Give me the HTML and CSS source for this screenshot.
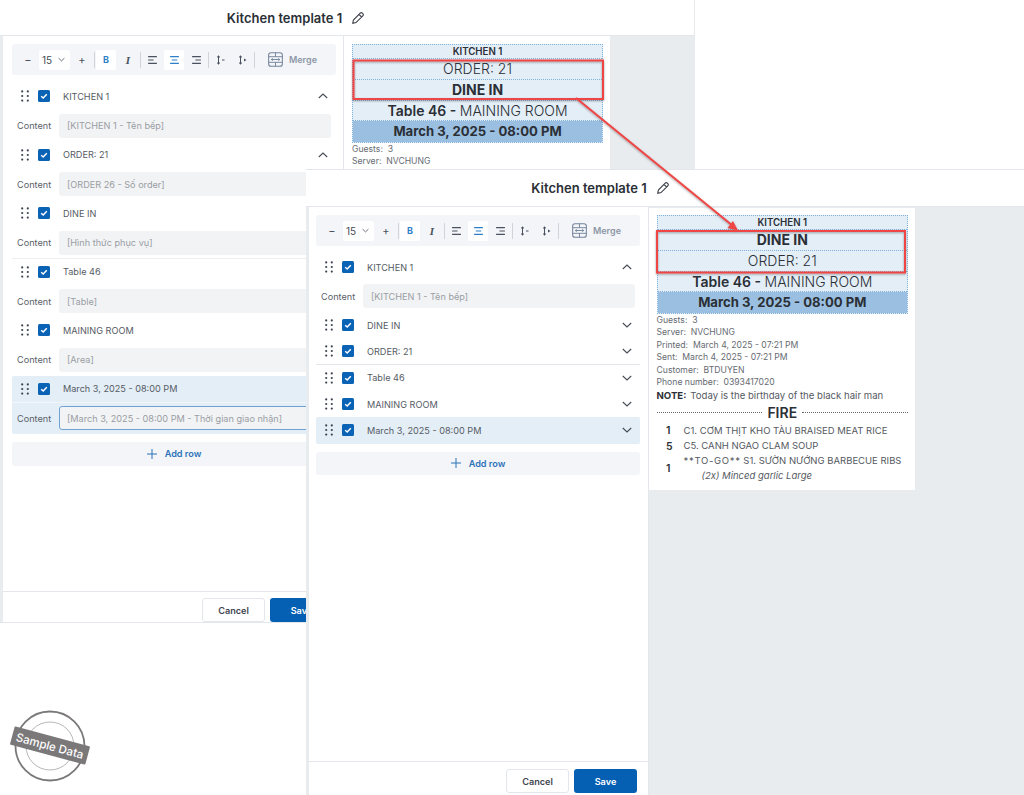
FILE: index.html
```html
<!DOCTYPE html>
<html lang="en">
<head>
<meta charset="utf-8">
<title>Kitchen template</title>
<link rel="stylesheet" href="styles.css">
</head>
<body>
<svg class="sprite" aria-hidden="true">
  <symbol id="grip" viewBox="0 0 8 12"><g fill="#3d4450"><circle cx="1.2" cy="1.4" r="1.1"/><circle cx="6.8" cy="1.4" r="1.1"/><circle cx="1.2" cy="6" r="1.1"/><circle cx="6.8" cy="6" r="1.1"/><circle cx="1.2" cy="10.6" r="1.1"/><circle cx="6.8" cy="10.6" r="1.1"/></g></symbol>
  <symbol id="check" viewBox="0 0 12 12"><rect width="12" height="12" rx="1.5" fill="#0b63b5"/><path d="M3.2 6.2 5.2 8 8.8 4.2" fill="none" stroke="#fff" stroke-width="1.5"/></symbol>
  <symbol id="up" viewBox="0 0 10 6"><path d="M.8 5 5 1l4.2 4" fill="none" stroke="#444b55" stroke-width="1.1"/></symbol>
  <symbol id="down" viewBox="0 0 10 6"><path d="M.8 1 5 5l4.2-4" fill="none" stroke="#444b55" stroke-width="1.1"/></symbol>
  <symbol id="left" viewBox="0 0 10 8"><path d="M1 1h8M1 4h5M1 7h8" fill="none" stroke="#4a5260" stroke-width="1.1"/></symbol>
  <symbol id="center" viewBox="0 0 10 8"><path d="M1 1h8M2.5 4h5M1 7h8" fill="none" stroke="#2d80c8" stroke-width="1.1"/></symbol>
  <symbol id="right" viewBox="0 0 10 8"><path d="M1 1h8M4 4h5M1 7h8" fill="none" stroke="#4a5260" stroke-width="1.1"/></symbol>
  <symbol id="spread" viewBox="0 0 10 10"><path d="M3 1v8M1.500 2.400 3 1l1.500 1.400M1.500 7.600 3 9l1.500-1.400M6.500 5H9" fill="none" stroke="#4a5260" stroke-width="1"/></symbol>
  <symbol id="squeeze" viewBox="0 0 10 10"><path d="M3 1v8M1.500 2.400 3 1l1.500 1.400M1.500 7.600 3 9l1.500-1.400" fill="none" stroke="#4a5260" stroke-width="1"/><path d="M6.500 3.500 9 5 6.500 6.500z" fill="#4a5260"/></symbol>
  <symbol id="merge" viewBox="0 0 16 16"><rect x=".7" y=".7" width="14.600" height="14.600" rx="2.500" fill="none" stroke="#74839a" stroke-width="1.100"/><path d="M.7 5h14.600M.7 11h14.600M8 .7V5M8 11v4.300M3.500 8h9M5 6.800 3.500 8 5 9.200M11 6.800 12.500 8 11 9.200" fill="none" stroke="#74839a" stroke-width="1"/></symbol>
  <symbol id="pencil" viewBox="0 0 12 12"><path d="M.8 11.200 1.400 8 8.200 1.200a1.500 1.500 0 0 1 2.100 0l.5.500a1.500 1.500 0 0 1 0 2.100L4 10.600z M7 2.400l2.600 2.600" fill="none" stroke="#3a3f47" stroke-width="1.100"/></symbol>
  <symbol id="plus" viewBox="0 0 10 10"><path d="M5 0v10M0 5h10" stroke="#2d73b8" stroke-width="1"/></symbol>
</svg>

<main class="stage">
  <section class="window window-back">
    <header class="win-head">
      <h1 class="win-title">Kitchen template 1</h1>
      <svg class="pencil"><use href="#pencil"/></svg>
    </header>
    <div class="win-body">
      <div class="panel">
        <div class="panel-scroll">
          <div class="toolbar">
            <span class="tool">−</span>
            <span class="size">15<svg class="size-caret"><use href="#down"/></svg></span>
            <span class="tool">+</span>
            <i class="sep"></i>
            <span class="tool tool-on tool-bold">B</span>
            <span class="tool tool-italic">I</span>
            <i class="sep"></i>
            <span class="tool"><svg class="ico"><use href="#left"/></svg></span>
            <span class="tool tool-on"><svg class="ico"><use href="#center"/></svg></span>
            <span class="tool"><svg class="ico"><use href="#right"/></svg></span>
            <i class="sep"></i>
            <span class="tool"><svg class="ico"><use href="#spread"/></svg></span>
            <span class="tool"><svg class="ico"><use href="#squeeze"/></svg></span>
            <i class="sep"></i>
            <svg class="merge-ico"><use href="#merge"/></svg>
            <span class="merge-label">Merge</span>
          </div>
          <div class="rows rows-back">
            <div class="row"><svg class="grip"><use href="#grip"/></svg><svg class="check"><use href="#check"/></svg><span class="row-name">KITCHEN 1</span><svg class="chev"><use href="#up"/></svg></div>
            <div class="field"><span class="field-label">Content</span><span class="input">[KITCHEN 1 - Tên bếp]</span></div>
            <div class="row"><svg class="grip"><use href="#grip"/></svg><svg class="check"><use href="#check"/></svg><span class="row-name">ORDER: 21</span><svg class="chev"><use href="#up"/></svg></div>
            <div class="field"><span class="field-label">Content</span><span class="input">[ORDER 26 - Số order]</span></div>
            <div class="row"><svg class="grip"><use href="#grip"/></svg><svg class="check"><use href="#check"/></svg><span class="row-name">DINE IN</span></div>
            <div class="field"><span class="field-label">Content</span><span class="input">[Hình thức phục vụ]</span></div>
            <div class="row row-top-rule"><svg class="grip"><use href="#grip"/></svg><svg class="check"><use href="#check"/></svg><span class="row-name">Table 46</span></div>
            <div class="field"><span class="field-label">Content</span><span class="input">[Table]</span></div>
            <div class="row"><svg class="grip"><use href="#grip"/></svg><svg class="check"><use href="#check"/></svg><span class="row-name">MAINING ROOM</span></div>
            <div class="field"><span class="field-label">Content</span><span class="input">[Area]</span></div>
            <div class="active-group">
              <div class="row"><svg class="grip"><use href="#grip"/></svg><svg class="check"><use href="#check"/></svg><span class="row-name">March 3, 2025 - 08:00 PM</span></div>
              <div class="field field-active"><span class="field-label">Content</span><span class="input input-focus">[March 3, 2025 - 08:00 PM - Thời gian giao nhận]</span></div>
            </div>
          </div>
          <div class="add-row"><svg class="plus"><use href="#plus"/></svg>Add row</div>
        </div>
        <footer class="win-foot">
          <span class="btn btn-cancel">Cancel</span>
          <span class="btn btn-save">Save</span>
        </footer>
      </div>
      <div class="preview">
        <div class="paper">
          <div class="ticket">
            <div class="t-row t-small">KITCHEN 1</div>
            <div class="t-row t-big">ORDER: 21</div>
            <div class="t-row t-big t-strong">DINE IN</div>
            <div class="t-row t-big"><b class="t-mid">Table 46 - </b>MAINING ROOM</div>
            <div class="t-row t-big t-strong t-band">March 3, 2025 - 08:00 PM</div>
          </div>
          <div class="meta">
            <p class="meta-line">Guests:&nbsp; 3</p>
            <p class="meta-line">Server:&nbsp; NVCHUNG</p>
          </div>
        </div>
      </div>
    </div>
  </section>

  <section class="window window-front">
    <header class="win-head">
      <h1 class="win-title">Kitchen template 1</h1>
      <svg class="pencil"><use href="#pencil"/></svg>
    </header>
    <div class="win-body">
      <div class="panel">
        <div class="panel-scroll">
          <div class="toolbar">
            <span class="tool">−</span>
            <span class="size">15<svg class="size-caret"><use href="#down"/></svg></span>
            <span class="tool">+</span>
            <i class="sep"></i>
            <span class="tool tool-on tool-bold">B</span>
            <span class="tool tool-italic">I</span>
            <i class="sep"></i>
            <span class="tool"><svg class="ico"><use href="#left"/></svg></span>
            <span class="tool tool-on"><svg class="ico"><use href="#center"/></svg></span>
            <span class="tool"><svg class="ico"><use href="#right"/></svg></span>
            <i class="sep"></i>
            <span class="tool"><svg class="ico"><use href="#spread"/></svg></span>
            <span class="tool"><svg class="ico"><use href="#squeeze"/></svg></span>
            <i class="sep"></i>
            <svg class="merge-ico"><use href="#merge"/></svg>
            <span class="merge-label">Merge</span>
          </div>
          <div class="rows rows-front">
            <div class="row"><svg class="grip"><use href="#grip"/></svg><svg class="check"><use href="#check"/></svg><span class="row-name">KITCHEN 1</span><svg class="chev"><use href="#up"/></svg></div>
            <div class="field"><span class="field-label">Content</span><span class="input">[KITCHEN 1 - Tên bếp]</span></div>
            <div class="row"><svg class="grip"><use href="#grip"/></svg><svg class="check"><use href="#check"/></svg><span class="row-name">DINE IN</span><svg class="chev"><use href="#down"/></svg></div>
            <div class="row row-rule"><svg class="grip"><use href="#grip"/></svg><svg class="check"><use href="#check"/></svg><span class="row-name">ORDER: 21</span><svg class="chev"><use href="#down"/></svg></div>
            <div class="row"><svg class="grip"><use href="#grip"/></svg><svg class="check"><use href="#check"/></svg><span class="row-name">Table 46</span><svg class="chev"><use href="#down"/></svg></div>
            <div class="row"><svg class="grip"><use href="#grip"/></svg><svg class="check"><use href="#check"/></svg><span class="row-name">MAINING ROOM</span><svg class="chev"><use href="#down"/></svg></div>
            <div class="row row-active"><svg class="grip"><use href="#grip"/></svg><svg class="check"><use href="#check"/></svg><span class="row-name">March 3, 2025 - 08:00 PM</span><svg class="chev"><use href="#down"/></svg></div>
          </div>
          <div class="add-row add-row-front"><svg class="plus"><use href="#plus"/></svg>Add row</div>
        </div>
        <footer class="win-foot">
          <span class="btn btn-cancel">Cancel</span>
          <span class="btn btn-save">Save</span>
        </footer>
      </div>
      <div class="preview">
        <div class="paper">
          <div class="ticket">
            <div class="t-row t-small">KITCHEN 1</div>
            <div class="t-row t-big t-strong">DINE IN</div>
            <div class="t-row t-big">ORDER: 21</div>
            <div class="t-row t-big"><b class="t-mid">Table 46 - </b>MAINING ROOM</div>
            <div class="t-row t-big t-strong t-band">March 3, 2025 - 08:00 PM</div>
          </div>
          <div class="meta">
            <p class="meta-line">Guests:&nbsp; 3</p>
            <p class="meta-line">Server:&nbsp; NVCHUNG</p>
            <p class="meta-line">Printed:&nbsp; March 4, 2025 - 07:21 PM</p>
            <p class="meta-line">Sent:&nbsp; March 4, 2025 - 07:21 PM</p>
            <p class="meta-line">Customer:&nbsp; BTDUYEN</p>
            <p class="meta-line">Phone number:&nbsp; 0393417020</p>
            <p class="note"><b class="note-key">NOTE:</b>Today is the birthday of the black hair man</p>
          </div>
          <div class="fire"><i class="fire-rule"></i><span class="fire-text">FIRE</span><i class="fire-rule"></i></div>
          <div class="item"><span class="qty">1</span><span class="item-name">C1. CƠM THỊT KHO TÀU BRAISED MEAT RICE</span></div>
          <div class="item"><span class="qty">5</span><span class="item-name">C5. CANH NGAO CLAM SOUP</span></div>
          <div class="item"><span class="qty">1</span><div class="item-name"><span class="item-tag">**TO-GO**</span> S1. SƯỜN NƯỚNG BARBECUE RIBS<div class="item-mod">(2x) Minced garlic Large</div></div></div>
        </div>
      </div>
    </div>
  </section>

  <svg class="marks" viewBox="0 0 1024 795" aria-hidden="true">
    <defs>
      <filter id="soft" x="-10%" y="-10%" width="120%" height="120%"><feDropShadow dx="0" dy="1" stdDeviation="1" flood-color="#555" flood-opacity=".55"/></filter>
    </defs>
    <g filter="url(#soft)" fill="none" stroke="#ef4444" stroke-width="2">
      <rect x="353.500" y="60.500" width="249.500" height="38.500"/>
      <rect x="657" y="231" width="248" height="41.500"/>
      <path d="M576 98 733 226"/>
      <path d="M738 230.500 733 221 727.500 228z" fill="#ef4444" stroke="none"/>
    </g>
  </svg>

  <div class="stamp">
    <svg class="stamp-rings" viewBox="0 0 80 72" aria-hidden="true">
      <circle cx="40" cy="36" r="34.500" fill="#fff" stroke="#7b787a" stroke-width="1.800"/>
      <circle cx="40" cy="36" r="24" fill="none" stroke="#a5a3a4" stroke-width=".8"/>
    </svg>
    <span class="stamp-band">Sample Data</span>
  </div>
</main>
</body>
</html>
```
FILE: styles.css
```css
* { box-sizing: border-box; }
html, body { margin: 0; padding: 0; background: #fff; }
body { font-family: Inter, "Noto Sans", "Liberation Sans", sans-serif; color: #3a3f47; overflow: hidden; }
.sprite { width: 0; height: 0; position: absolute; }
.stage { position: relative; width: 1024px; height: 795px; overflow: hidden; background: #fff; }

/* windows on the canvas */
.window { position: absolute; display: flex; flex-direction: column; background: #fff; }
.window-back { left: 0; top: 0; width: 695px; height: 623px; border-bottom: 1px solid #e3e6ea; border-right: 1px solid #e8eaee; }
.window-front { left: 306px; top: 169px; width: 718px; height: 626px; border-top: 1px solid #e3e6ea; }

.win-head { flex: none; display: flex; align-items: center; justify-content: center; gap: 10px; height: 36px; border-bottom: 1px solid #e3e6ea; }
.window-back .win-head { padding-right: 103px; }
.window-front .win-head { height: 37px; padding-right: 130px; }
.win-title { margin: 0; font-size: 13px; font-weight: 600; color: #2b2f36; }
.pencil { width: 12px; height: 12px; }

.win-body { flex: 1; min-height: 0; display: flex; background: #e9ecef; }
.panel { flex: none; display: flex; flex-direction: column; background: #fff; border-right: 1px solid #e3e6ea; }
.window-back .panel { width: 341px; margin-left: 3px; }
.window-front .panel { width: 340px; margin-left: 3px; }
.panel-scroll { flex: 1; min-height: 0; padding-top: 8px; }
.window-back .panel-scroll { padding-left: 9px; }
.window-front .panel-scroll { padding-left: 7px; }

.toolbar { width: 324px; height: 31px; padding-left: 5px; display: flex; align-items: center; background: #f3f5f9; border-radius: 3px; }
.tool { flex: none; width: 20px; height: 20px; margin: 0 1px; display: flex; align-items: center; justify-content: center; border-radius: 2px; font-size: 11px; color: #4a5260; }
.tool-on { background: #fff; }
.tool-bold { font-size: 9px; font-weight: 700; color: #2d80c8; }
.tool-italic { font-family: "Liberation Serif", serif; font-style: italic; font-weight: 700; font-size: 11px; }
.size { flex: none; width: 31px; height: 20px; margin-right: 1px; display: flex; align-items: center; justify-content: space-between; padding: 0 5px 0 3px; background: #fff; border-radius: 2px; font-size: 10px; color: #444b55; }
.size-caret { width: 7px; height: 5px; }
.sep { flex: none; width: 1px; height: 16px; margin-left: 1px; background: #cfd4db; }
.ico { width: 11px; height: 10px; }
.merge-ico { flex: none; width: 15px; height: 15px; margin-left: 13px; }
.merge-label { margin-left: 6px; font-size: 9px; font-weight: 600; color: #8d97a6; }

.rows { margin-top: 8px; width: 324px; display: flex; flex-direction: column; }
.row { flex: none; position: relative; height: 26.500px; display: flex; align-items: center; padding-left: 9px; }
.rows-front .row { height: 26.250px; }
.row-rule { border-bottom: 1px solid #e3e6ea; }
.row-top-rule { box-shadow: 0 -1px 0 #eceef1; }
.row-active { background: #e4eef7; border-radius: 2px; }
.grip { flex: none; width: 8px; height: 12px; }
.check { flex: none; width: 12px; height: 12px; margin-left: 9px; }
.row-name { margin-left: 13px; font-size: 9.150px; color: #555b64; }
.chev { width: 10px; height: 6px; margin-left: auto; margin-right: 8px; }
.field { flex: none; height: 24px; margin: 4px 0; display: flex; align-items: center; padding-left: 5px; }
.field-label { flex: none; width: 42px; font-size: 9.150px; color: #5a6068; }
.input { flex: none; width: 272px; height: 24px; display: flex; align-items: center; padding-left: 8px; background: #f1f3f5; border-radius: 3px; font-size: 9.150px; color: #9a9da3; white-space: nowrap; }
.active-group { background: #e4eef7; border-radius: 2px; }
.field-active { margin: 0; height: 31.500px; padding-top: 3px; padding-bottom: 3.500px; border-top: 1px solid #f2f6fa; }
.input-focus { border: 1px solid #6fa3d4; padding-left: 7px; width: 290px; height: 100%; }
.add-row { width: 324px; height: 24px; margin-top: 8px; display: flex; align-items: center; justify-content: center; gap: 8px; background: #f3f5f9; border-radius: 3px; font-size: 9.150px; font-weight: 600; color: #2d73b8; }
.add-row-front { height: 23px; }
.plus { width: 10px; height: 10px; }

.win-foot { flex: none; height: 31px; display: flex; justify-content: flex-end; align-items: flex-start; gap: 5px; padding: 6px 10px 0 0; border-top: 1px solid #e3e6ea; }
.window-front .win-foot { height: 34px; padding: 7px 11px 0 0; }
.btn { width: 63px; height: 24px; display: flex; align-items: center; justify-content: center; border-radius: 3px; font-size: 9.150px; font-weight: 600; }
.btn-cancel { background: #fff; border: 1px solid #e3e6ea; color: #3f4650; }
.btn-save { background: #0560b4; color: #fff; }

/* ticket preview */
.preview { flex: 1; min-width: 0; }
.paper { width: 266px; padding: 8px 7px 7px 8px; background: #fff; }
.window-front .preview { padding-top: 1px; }
.window-front .paper { padding: 7px 7px 7px 7.500px; }
.ticket { border: 1px dotted #7fb0dd; background: #e4eef7; }
.t-row { text-align: center; color: #2b2f36; border-bottom: 1px dotted #7fb0dd; }
.t-row:last-child { border-bottom: 0; }
.t-small { height: 14px; line-height: 13px; font-size: 9.700px; font-weight: 600; }
.t-big { height: 20.750px; line-height: 20px; font-size: 14px; font-weight: 300; }
.t-strong { font-weight: 700; }
.t-mid { font-weight: 600; }
.t-band { background: #9abfe0; font-size: 13.100px; }
.meta { margin-top: -.500px; }
.meta-line { margin: 0; height: 12.500px; line-height: 12.500px; font-size: 8.650px; color: #666b72; }
.note { margin: 0; height: 14px; line-height: 14px; font-size: 9.600px; color: #55595f; }
.note-key { font-weight: 700; color: #2b2f36; margin-right: 4px; }
.fire { display: flex; align-items: center; gap: 5px; margin: 1px 0 1.500px; height: 18px; }
.fire-rule { flex: 1; border-top: 1px dotted #666; }
.fire-text { font-size: 14px; font-weight: 600; color: #2b2f36; }
.item { display: flex; align-items: center; min-height: 15.500px; }
.qty { flex: none; width: 27px; padding-left: 9.500px; font-size: 10.500px; font-weight: 600; color: #2b2f36; }
.item-name { font-size: 9.500px; line-height: 14.500px; color: #55595f; white-space: nowrap; }
.item-tag { letter-spacing: .700px; }
.item-mod { padding-left: 18px; font-style: italic; }

/* annotation overlays */
.marks { position: absolute; left: 0; top: 0; width: 1024px; height: 795px; pointer-events: none; }
.stamp { position: absolute; left: 9px; top: 709px; width: 82px; height: 74px; }
.stamp-rings { position: absolute; left: 1px; top: 1px; width: 80px; height: 72px; }
.stamp-band { position: absolute; left: 2px; top: 26.500px; width: 78px; height: 19px; display: flex; align-items: center; justify-content: center; background: #7b787a; color: #fff; font-size: 11.500px; font-weight: 500; transform: rotate(15deg); border-radius: 1px; }
```
